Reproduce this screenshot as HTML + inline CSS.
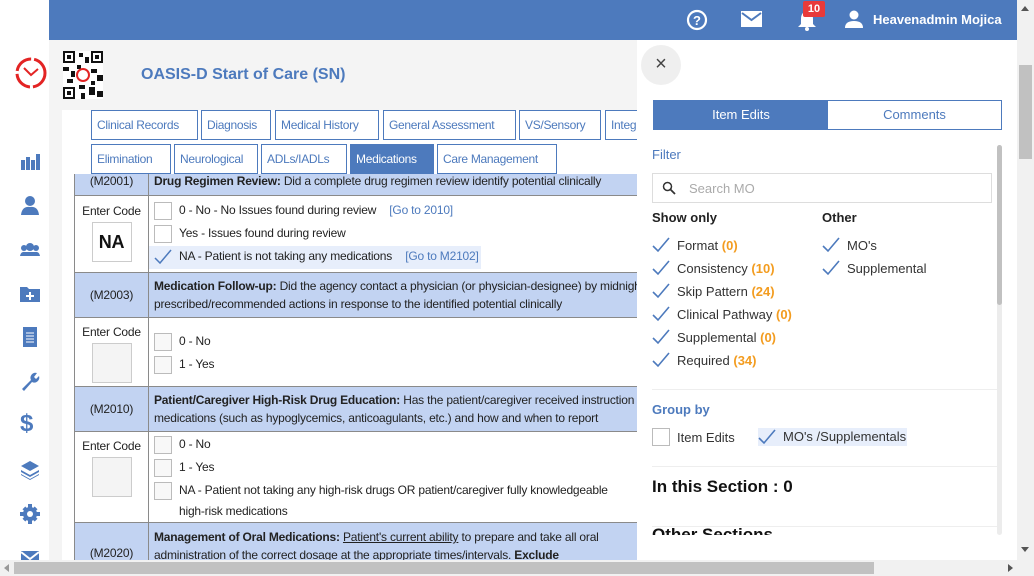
<!DOCTYPE html>
<html><head><meta charset="utf-8"><style>
*{box-sizing:border-box;margin:0;padding:0}
body{width:1034px;height:576px;overflow:hidden;position:relative;background:#f4f4f4;font-family:"Liberation Sans",sans-serif;font-size:12px;color:#222}
.abs{position:absolute}
.side{left:0;top:0;width:49px;height:576px;background:#fff}
.hdr{left:49px;top:0;width:968px;height:40px;background:#4d7abd;color:#fff}
.ico{position:absolute;left:20px;width:20px;height:20px}
.tab{position:absolute;height:30px;border:1px solid #4d7abd;color:#4d7abd;background:#fff;font-size:12px;letter-spacing:-0.3px;line-height:28px;padding:0 5px;white-space:nowrap;overflow:hidden}
.tab.on{background:#4d7abd;color:#fff}
table{border-collapse:collapse;position:absolute;width:800px;table-layout:fixed}
td{border:1.5px solid #8a8a8a;vertical-align:top;white-space:nowrap;overflow:hidden;letter-spacing:-0.2px}
.hd td{background:#c2d3f2}
.c1{width:74px;text-align:center}
.opt{position:relative;height:23px;line-height:21px;padding-left:30px;white-space:nowrap}
.cb{position:absolute;left:5px;top:2px;width:18px;height:18px;border:1px solid #bbb;background:#f8f8f8}
.code{width:40px;height:40px;border:1px solid #ccc;background:#f4f4f4;margin:4px auto 0}
.rp{left:637px;top:40px;width:380px;height:520px;background:#fff;font-family:"Liberation Sans",sans-serif;overflow:hidden}
.chk{position:absolute;font-size:13px;color:#333;padding-left:25px;white-space:nowrap}
.chk svg{position:absolute;left:0;top:-1px}
.n{color:#f39c1f;font-weight:bold}
</style></head><body>
<div class="abs side">
<svg class="abs" style="left:13px;top:55px" width="36" height="36" viewBox="0 0 36 36"><circle cx="18" cy="18" r="14" fill="none" stroke="#e32424" stroke-width="3" stroke-dasharray="20 3"/><path d="M11 13 L18 20 L25 14" fill="none" stroke="#e32424" stroke-width="2"/></svg>
<svg class="ico" style="top:151px" viewBox="0 0 20 20" fill="#4d7abd"><rect x="1" y="9" width="4" height="10"/><rect x="6" y="6" width="4" height="13"/><rect x="11" y="9" width="4" height="10"/><rect x="16" y="3" width="4" height="16"/></svg>
<svg class="ico" style="top:195px" viewBox="0 0 20 20" fill="#4d7abd"><circle cx="10" cy="6" r="5"/><path d="M1 20 Q2 11 10 12 Q18 11 19 20Z"/></svg>
<svg class="ico" style="top:240px" viewBox="0 0 20 20" fill="#4d7abd"><circle cx="10" cy="7" r="4"/><circle cx="4" cy="8" r="3"/><circle cx="16" cy="8" r="3"/><path d="M0 16 Q1 11 5 12 L15 12 Q19 11 20 16Z"/></svg>
<svg class="ico" style="top:284px" viewBox="0 0 20 20" fill="#4d7abd"><path d="M0 3 H7 L9 5 H20 V18 H0Z"/><path d="M9 8 h2 v3 h3 v2 h-3 v3 h-2 v-3 h-3 v-2 h3z" fill="#fff"/></svg>
<svg class="ico" style="top:327px" viewBox="0 0 20 20" fill="#4d7abd"><rect x="3" y="0" width="14" height="20"/><path d="M6 6h8M6 9h8M6 12h8M6 15h8" stroke="#fff"/></svg>
<svg class="ico" style="top:371px" viewBox="0 0 20 20" fill="#4d7abd"><path d="M2 18 L11 9 A5 5 0 0 1 17 2 L14 6 L16 8 L19 5 A5 5 0 0 1 12 11 L4 20Z"/></svg>
<div class="abs" style="left:20px;top:410px;font:bold 24px 'Liberation Sans';color:#4d7abd">$</div>
<svg class="ico" style="top:460px" viewBox="0 0 20 20" fill="#4d7abd"><path d="M10 1 L19 6 L10 11 L1 6Z"/><path d="M1 10 L10 15 L19 10 V12 L10 17 L1 12Z"/><path d="M1 14 L10 19 L19 14 V15 L10 20 L1 15Z"/></svg>
<svg class="ico" style="top:504px" viewBox="0 0 20 20" fill="#4d7abd"><circle cx="10" cy="10" r="7"/><path d="M8 0h4v20h-4zM0 8h20v4H0z"/><path d="M2.5 5.3L5.3 2.5 17.5 14.7 14.7 17.5zM14.7 2.5L17.5 5.3 5.3 17.5 2.5 14.7z"/><circle cx="10" cy="10" r="3" fill="#fff"/></svg>
<svg class="ico" style="top:549px" viewBox="0 0 20 20" fill="#4d7abd"><rect x="1" y="2" width="18" height="14"/><path d="M1 3 L10 10 L19 3" stroke="#fff" fill="none" stroke-width="2"/></svg>
</div>
<div class="abs hdr">
<svg class="abs" style="left:637px;top:9px" width="22" height="22" viewBox="0 0 22 22"><circle cx="11" cy="11" r="9" fill="none" stroke="#fff" stroke-width="2.2"/><text x="11" y="16" text-anchor="middle" fill="#fff" font-size="13" font-weight="bold" font-family="Liberation Sans">?</text></svg>
<svg class="abs" style="left:692px;top:11px" width="21" height="16" viewBox="0 0 21 16"><rect width="21" height="16" fill="#fff"/><path d="M1 2 L10.5 9 L20 2" stroke="#4d7abd" stroke-width="2" fill="none"/></svg>
<svg class="abs" style="left:748px;top:9px" width="20" height="22" viewBox="0 0 20 22" fill="#fff"><path d="M10 2 Q16 3 16 10 V15 L19 18 H1 L4 15 V10 Q4 3 10 2Z"/><circle cx="10" cy="20" r="2"/></svg>
<div class="abs" style="left:754px;top:1px;width:22px;height:16px;background:#e83a3a;color:#fff;font:bold 11px 'Liberation Sans';text-align:center;line-height:16px;border-radius:2px">10</div>
<svg class="abs" style="left:796px;top:10px" width="18" height="18" viewBox="0 0 18 18" fill="#fff"><circle cx="9" cy="5" r="4.5"/><path d="M0 18 Q0 11 9 11 Q18 11 18 18Z"/></svg>
<div class="abs" style="left:824px;top:12px;font:bold 13px 'Liberation Sans'">Heavenadmin Mojica</div>
</div>
<svg class="abs" style="left:63px;top:51px" width="40" height="48" viewBox="0 0 20 24"><rect width="20" height="24" fill="#fff"/><g fill="#111"><rect x="0" y="0" width="6" height="6"/><rect x="14" y="0" width="6" height="6"/><rect x="0" y="18" width="6" height="6"/><g fill="#fff"><rect x="1" y="1" width="4" height="4"/><rect x="15" y="1" width="4" height="4"/><rect x="1" y="19" width="4" height="4"/></g><rect x="2" y="2" width="2" height="2"/><rect x="16" y="2" width="2" height="2"/><rect x="2" y="20" width="2" height="2"/><rect x="8" y="1" width="2" height="2"/><rect x="11" y="3" width="2" height="3"/><rect x="0" y="8" width="3" height="2"/><rect x="4" y="10" width="2" height="3"/><rect x="14" y="9" width="3" height="2"/><rect x="17" y="12" width="3" height="3"/><rect x="2" y="14" width="3" height="2"/><rect x="8" y="17" width="3" height="2"/><rect x="13" y="18" width="3" height="4"/><rect x="17" y="20" width="3" height="3"/><rect x="9" y="21" width="2" height="3"/><rect x="7" y="7" width="2" height="2"/><rect x="14" y="15" width="2" height="2"/></g><circle cx="10" cy="12" r="3" fill="none" stroke="#e32424" stroke-width="1"/></svg>
<div class="abs" style="left:141px;top:66px;font-size:16px;font-weight:bold;color:#4d7abd">OASIS-D Start of Care (SN)</div>
<div class="abs" style="left:62px;top:110px;width:575px;height:450px;background:#fff"></div>
<div class="tab" style="left:91px;top:110px;width:107px">Clinical Records</div>
<div class="tab" style="left:201px;top:110px;width:70px">Diagnosis</div>
<div class="tab" style="left:275px;top:110px;width:104px">Medical History</div>
<div class="tab" style="left:383px;top:110px;width:133px">General Assessment</div>
<div class="tab" style="left:519px;top:110px;width:82px">VS/Sensory</div>
<div class="tab" style="left:605px;top:110px;width:40px">Integ</div>
<div class="tab" style="left:91px;top:144px;width:80px">Elimination</div>
<div class="tab" style="left:174px;top:144px;width:84px">Neurological</div>
<div class="tab" style="left:261px;top:144px;width:86px">ADLs/IADLs</div>
<div class="tab on" style="left:350px;top:144px;width:84px">Medications</div>
<div class="tab" style="left:437px;top:144px;width:120px">Care Management</div>
<div class="abs" style="left:62px;top:174px;width:575px;height:386px;overflow:hidden">
<table style="left:12px;top:-11px">
<colgroup><col style="width:74px"><col style="width:726px"></colgroup>
<tr class="hd"><td class="c1" style="height:32px;padding-top:10px">(M2001)</td><td style="padding:10px 5px 0"><b>Drug Regimen Review:</b> Did a complete drug regimen review identify potential clinically</td></tr>
<tr><td class="c1" style="height:77px;padding-top:8px">Enter Code<div class="code" style="background:#fff;font:bold 18px 'Liberation Sans';line-height:38px;color:#111;width:40px">NA</div></td><td style="padding-top:4px">
<div class="opt"><span class="cb" style="background:#fff"></span>0 - No - No Issues found during review <span style="color:#4d7abd;margin-left:10px">[Go to 2010]</span></div>
<div class="opt"><span class="cb" style="background:#fff"></span>Yes - Issues found during review</div>
<div class="opt" style="background:#e7eefb;display:inline-block;padding-right:2px"><svg class="abs" style="left:5px;top:3px" width="18" height="16" viewBox="0 0 18 16"><path d="M1 9 L6 14 L17 1" stroke="#4d7abd" stroke-width="1.5" fill="none"/></svg>NA - Patient is not taking any medications <span style="color:#4d7abd;margin-left:10px">[Go to M2102]</span></div></td></tr>
<tr class="hd"><td class="c1" style="height:44px;line-height:44px">(M2003)</td><td style="padding:4px 5px;line-height:18px"><b>Medication Follow-up:</b> Did the agency contact a physician (or physician-designee) by midnight<br>prescribed/recommended actions in response to the identified potential clinically</td></tr>
<tr><td class="c1" style="height:69px;padding-top:7px">Enter Code<div class="code"></div></td><td style="padding-top:13px"><div class="opt"><span class="cb"></span>0 - No</div><div class="opt"><span class="cb"></span>1 - Yes</div></td></tr>
<tr class="hd"><td class="c1" style="height:44px;line-height:44px">(M2010)</td><td style="padding:4px 5px;line-height:18px"><b>Patient/Caregiver High-Risk Drug Education:</b> Has the patient/caregiver received instruction on special<br>medications (such as hypoglycemics, anticoagulants, etc.) and how and when to report</td></tr>
<tr><td class="c1" style="height:91px;padding-top:7px">Enter Code<div class="code"></div></td><td style="padding-top:2px"><div class="opt"><span class="cb"></span>0 - No</div><div class="opt"><span class="cb"></span>1 - Yes</div><div class="opt"><span class="cb"></span>NA - Patient not taking any high-risk drugs OR patient/caregiver fully knowledgeable</div><div style="padding-left:30px;line-height:17px">high-risk medications</div></td></tr>
<tr class="hd"><td class="c1" style="height:60px;padding-top:23px">(M2020)</td><td style="padding:5px;line-height:18px"><b>Management of Oral Medications:</b> <u>Patient's current ability</u> to prepare and take all oral<br>administration of the correct dosage at the appropriate times/intervals. <b>Exclude</b></td></tr>
</table></div>
<div class="abs rp">
<div class="abs" style="left:4px;top:5px;width:40px;height:40px;border-radius:50%;background:#efefef;text-align:center;line-height:38px;font-size:20px;color:#444">×</div>
<div class="abs" style="left:16px;top:60px;width:349px;height:30px;border:1px solid #4d7abd;font-size:13px">
<div class="abs" style="left:0;top:0;width:174px;height:28px;background:#4d7abd;color:#fff;text-align:center;line-height:28px">Item Edits</div>
<div class="abs" style="left:174px;top:0;width:173px;height:28px;color:#4d7abd;text-align:center;line-height:28px">Comments</div></div>
<div class="abs" style="left:15px;top:107px;color:#4d7abd;font-size:13px">Filter</div>
<div class="abs" style="left:15px;top:133px;width:340px;height:30px;border:1px solid #ddd">
<svg class="abs" style="left:9px;top:7px" width="14" height="14" viewBox="0 0 14 14"><circle cx="5.5" cy="5.5" r="4" fill="none" stroke="#333" stroke-width="1.5"/><path d="M8.5 8.5 L13 13" stroke="#333" stroke-width="1.8"/></svg>
<div class="abs" style="left:36px;top:7px;color:#aaa;font-size:13px">Search MO</div></div>
<div class="abs" style="left:15px;top:170px;font-size:13px;font-weight:bold;color:#222">Show only</div>
<div class="abs" style="left:185px;top:170px;font-size:13px;font-weight:bold;color:#222">Other</div>
<div class="chk" style="left:15px;top:198px"><svg width="18" height="16" viewBox="0 0 18 16"><path d="M1 9 L6 14 L17 1" stroke="#4d7abd" stroke-width="1.6" fill="none"/></svg>Format <span class="n">(0)</span></div>
<div class="chk" style="left:15px;top:221px"><svg width="18" height="16" viewBox="0 0 18 16"><path d="M1 9 L6 14 L17 1" stroke="#4d7abd" stroke-width="1.6" fill="none"/></svg>Consistency <span class="n">(10)</span></div>
<div class="chk" style="left:15px;top:244px"><svg width="18" height="16" viewBox="0 0 18 16"><path d="M1 9 L6 14 L17 1" stroke="#4d7abd" stroke-width="1.6" fill="none"/></svg>Skip Pattern <span class="n">(24)</span></div>
<div class="chk" style="left:15px;top:267px"><svg width="18" height="16" viewBox="0 0 18 16"><path d="M1 9 L6 14 L17 1" stroke="#4d7abd" stroke-width="1.6" fill="none"/></svg>Clinical Pathway <span class="n">(0)</span></div>
<div class="chk" style="left:15px;top:290px"><svg width="18" height="16" viewBox="0 0 18 16"><path d="M1 9 L6 14 L17 1" stroke="#4d7abd" stroke-width="1.6" fill="none"/></svg>Supplemental <span class="n">(0)</span></div>
<div class="chk" style="left:15px;top:313px"><svg width="18" height="16" viewBox="0 0 18 16"><path d="M1 9 L6 14 L17 1" stroke="#4d7abd" stroke-width="1.6" fill="none"/></svg>Required <span class="n">(34)</span></div>
<div class="chk" style="left:185px;top:198px"><svg width="18" height="16" viewBox="0 0 18 16"><path d="M1 9 L6 14 L17 1" stroke="#4d7abd" stroke-width="1.6" fill="none"/></svg>MO's</div>
<div class="chk" style="left:185px;top:221px"><svg width="18" height="16" viewBox="0 0 18 16"><path d="M1 9 L6 14 L17 1" stroke="#4d7abd" stroke-width="1.6" fill="none"/></svg>Supplemental</div>
<div class="abs" style="left:15px;top:349px;width:346px;height:1px;background:#eee"></div>
<div class="abs" style="left:15px;top:362px;color:#4d7abd;font-size:13px;font-weight:bold">Group by</div>
<div class="abs" style="left:15px;top:388px;width:18px;height:18px;border:1px solid #bbb"></div>
<div class="abs" style="left:40px;top:390px;font-size:13px;color:#333">Item Edits</div>
<div class="chk" style="left:121px;top:388px;background:#e7eefb;padding-right:1px;height:18px;line-height:18px"><svg width="18" height="16" viewBox="0 0 18 16" style="top:1px"><path d="M1 9 L6 14 L17 1" stroke="#4d7abd" stroke-width="1.6" fill="none"/></svg>MO's /Supplementals</div>
<div class="abs" style="left:15px;top:426px;width:346px;height:1px;background:#eee"></div>
<div class="abs" style="left:15px;top:437px;font-size:17px;font-weight:bold;color:#111">In this Section : 0</div>
<div class="abs" style="left:15px;top:486px;width:346px;height:1px;background:#eee"></div>
<div class="abs" style="left:15px;top:486px;height:9px;overflow:hidden;width:200px"><div style="font-size:17px;font-weight:bold;color:#111;margin-top:-1px">Other Sections</div></div>
<div class="abs" style="left:360px;top:105px;width:5px;height:390px;background:#ececec;border-radius:3px"><div style="height:160px;background:#c1c1c1;border-radius:3px"></div></div>
</div>
<div class="abs" style="left:1017px;top:0;width:17px;height:560px;background:#f1f1f1"><div style="position:absolute;left:2px;top:65px;width:13px;height:94px;background:#c1c1c1"></div>
<div style="position:absolute;left:4px;top:6px;border:4px solid transparent;border-bottom:5px solid #555;border-top:0"></div><div style="position:absolute;left:4px;top:547px;border:4px solid transparent;border-top:5px solid #555;border-bottom:0"></div></div>
<div class="abs" style="left:0;top:560px;width:1034px;height:16px;background:#f1f1f1"><div style="position:absolute;left:14px;top:2px;width:860px;height:12px;background:#c1c1c1"></div>
<div style="position:absolute;left:4px;top:4px;border:4px solid transparent;border-right:5px solid #999;border-left:0"></div><div style="position:absolute;left:1008px;top:4px;border:4px solid transparent;border-left:5px solid #555;border-right:0"></div></div>
</body></html>
